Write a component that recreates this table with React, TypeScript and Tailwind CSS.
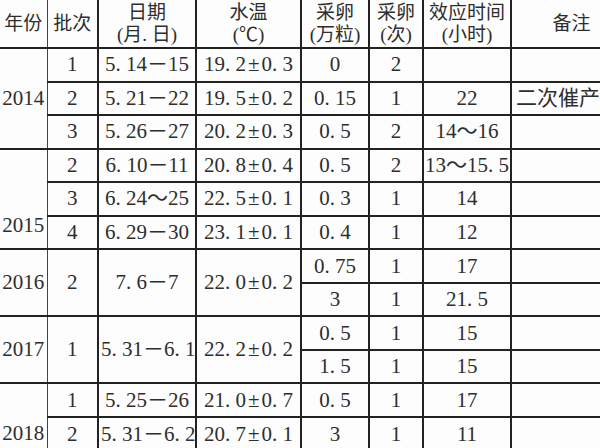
type Cell = { t: string; rs?: number; cls?: string };

const data: Cell[][] = [
  [{ t: "2014", rs: 3 }, { t: "1" }, { t: "5. 14－15" }, { t: "19. 2±0. 3" }, { t: "0" }, { t: "2" }, { t: "" }, { t: "" }],
  [{ t: "2" }, { t: "5. 21－22" }, { t: "19. 5±0. 2" }, { t: "0. 15" }, { t: "1" }, { t: "22" }, { t: "二次催产", cls: "text-left pl-[4px] whitespace-nowrap" }],
  [{ t: "3" }, { t: "5. 26－27" }, { t: "20. 2±0. 3" }, { t: "0. 5" }, { t: "2" }, { t: "14～16" }, { t: "" }],
  [{ t: "2015", rs: 3, cls: "align-bottom pb-[12px]" }, { t: "2" }, { t: "6. 10－11" }, { t: "20. 8±0. 4" }, { t: "0. 5" }, { t: "2" }, { t: "13～15. 5" }, { t: "" }],
  [{ t: "3" }, { t: "6. 24～25" }, { t: "22. 5±0. 1" }, { t: "0. 3" }, { t: "1" }, { t: "14" }, { t: "" }],
  [{ t: "4" }, { t: "6. 29－30" }, { t: "23. 1±0. 1" }, { t: "0. 4" }, { t: "1" }, { t: "12" }, { t: "" }],
  [{ t: "2016", rs: 2 }, { t: "2", rs: 2 }, { t: "7. 6－7", rs: 2 }, { t: "22. 0±0. 2", rs: 2 }, { t: "0. 75" }, { t: "1" }, { t: "17" }, { t: "" }],
  [{ t: "3" }, { t: "1" }, { t: "21. 5" }, { t: "" }],
  [{ t: "2017", rs: 2 }, { t: "1", rs: 2 }, { t: "5. 31－6. 1", rs: 2, cls: "text-left pl-[2px] whitespace-nowrap" }, { t: "22. 2±0. 2", rs: 2 }, { t: "0. 5" }, { t: "1" }, { t: "15" }, { t: "" }],
  [{ t: "1. 5" }, { t: "1" }, { t: "15" }, { t: "" }],
  [{ t: "2018", rs: 2, cls: "align-bottom pb-[7px]" }, { t: "1" }, { t: "5. 25－26" }, { t: "21. 0±0. 7" }, { t: "0. 5" }, { t: "1" }, { t: "17" }, { t: "" }],
  [{ t: "2" }, { t: "5. 31－6. 2", cls: "text-left pl-[2px] whitespace-nowrap" }, { t: "20. 7±0. 1" }, { t: "3" }, { t: "1" }, { t: "11" }, { t: "" }],
];

const widths = [47, 51, 98, 105, 68, 54, 88, 120];

// widen the ± a bit, the scan sets it wider than the digits
function Val({ t }: { t: string }) {
  const i = t.indexOf("±");
  if (i < 0) return <>{t}</>;
  return (
    <span className="whitespace-nowrap">
      {t.slice(0, i)}
      <span className="mx-[2px]">±</span>
      {t.slice(i + 1)}
    </span>
  );
}

export default function App() {
  return (
    <div
      className="w-[600px] h-[448px] overflow-hidden bg-[#fdfdfd] text-[#2e2e2e]"
      style={{ fontFamily: "'Liberation Serif', 'Noto Sans CJK SC', serif" }}
    >
      <table className="border-collapse table-fixed w-[631px] text-[21px] leading-none">
        <colgroup>
          {widths.map((w, i) => (
            <col key={i} style={{ width: w }} />
          ))}
        </colgroup>
        <thead>
          <tr className="h-[48px] text-[19px] border-b border-[#666]">
            <th className="font-normal border-r border-[#444] p-0">年份</th>
            <th className="font-normal border-r-2 border-[#222] p-0">批次</th>
            <th className="font-normal border-r-2 border-[#222] p-0 leading-[22px]">
              日期
              <br />
              (月. 日)
            </th>
            <th className="font-normal border-r-2 border-[#222] p-0 leading-[22px]">
              水温
              <br />
              (℃)
            </th>
            <th className="font-normal border-r-2 border-[#222] p-0 leading-[22px]">
              采卵
              <br />
              (万粒)
            </th>
            <th className="font-normal border-r-2 border-[#222] p-0 leading-[22px]">
              采卵
              <br />
              (次)
            </th>
            <th className="font-normal border-r-2 border-[#222] p-0 leading-[22px] whitespace-nowrap">
              效应时间
              <br />
              (小时)
            </th>
            <th className="font-normal p-0">备注</th>
          </tr>
        </thead>
        <tbody>
          {data.map((row, ri) => (
            <tr key={ri} className="h-[33.55px]">
              {row.map((c, ci) => {
                const first = row.length === 8 && ci === 0;
                return (
                  <td
                    key={ci}
                    rowSpan={c.rs}
                    className={`p-0 text-center border-t-2 border-[#222] ${
                      first ? "border-r border-r-[#444]" : "border-r-2"
                    } ${c.cls ?? ""}`}
                  >
                    <Val t={c.t} />
                  </td>
                );
              })}
            </tr>
          ))}
        </tbody>
      </table>
    </div>
  );
}
